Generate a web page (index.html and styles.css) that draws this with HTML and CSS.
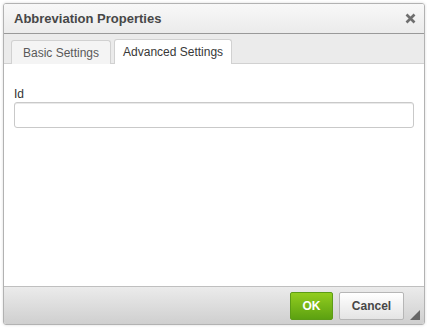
FILE: index.html
```html
<!DOCTYPE html>
<html>
<head>
    <meta charset="utf-8">
    <link rel="stylesheet" href="styles.css">
</head>
<body>
<div class="dialog">
    <div class="title">
        <span class="title-text">Abbreviation Properties</span>
        <svg class="close" width="11" height="11" viewBox="0 0 11 11"><path d="M1.5 1.5 L9.5 9.5 M9.5 1.5 L1.5 9.5" stroke="#6f6f6f" stroke-width="2.6"/></svg>
    </div>
    <div class="tabs">
        <div class="tab">Basic Settings</div>
        <div class="tab selected">Advanced Settings</div>
    </div>
    <div class="contents">
        <label for="id" class="field-label">Id</label>
        <input id="id" type="text" class="field-input" />
    </div>
    <div class="footer">
        <button class="btn ok">OK</button>
        <button class="btn cancel">Cancel</button>
        <span class="resize"></span>
    </div>
</div>
</body>
</html>
```

FILE: styles.css
```css
body {margin:0; background:#fff; font-family:"Liberation Sans", Arial, sans-serif; font-size:12px; color:#333;}
.dialog {margin:3px; width:422px; height:322px; border:1px solid #b2b2b2; border-radius:3px; display:flex; flex-direction:column; box-sizing:border-box; overflow:hidden; box-shadow:0 0 3px rgba(0,0,0,0.15);}
.title {height:30px; display:flex; align-items:center; justify-content:space-between; padding:0 8px 0 10px; background:linear-gradient(#f8f8f8, #ebebeb); border-bottom:1px solid #999; box-sizing:border-box;}
.title-text {font-weight:bold; font-size:13px; color:#474747;}
.close {display:block;}
.tabs {height:30px; background:#ebebeb; display:flex; align-items:flex-end; padding-left:7px; gap:3px; border-bottom:1px solid #d1d1d1; box-sizing:border-box;}
.tab {height:24px; padding:0 11px; display:flex; align-items:center; border:1px solid #d1d1d1; border-bottom:none; border-radius:3px 3px 0 0; background:#f4f4f4; color:#595959; margin-bottom:-1px; box-sizing:border-box;}
.tab.selected {background:#fff; height:25px; color:#383838; padding:0 8px;}
.contents {flex:1; background:#fff; padding:23px 10px 0 10px; display:flex; flex-direction:column;}
.field-label {color:#333; margin-bottom:1px; line-height:14px;}
.field-input {height:26px; box-sizing:border-box; border:1px solid #c9c9c9; border-radius:3px; box-shadow:inset 0 1px 0 #e9e9e9; margin:0;}
.footer {height:38px; border-top:1px solid #bfbfbf; background:linear-gradient(#ebebeb, #cfcfcf); display:flex; align-items:center; justify-content:flex-end; padding-right:20px; gap:6px; position:relative; box-sizing:border-box;}
.btn {height:28px; border-radius:2px; font-family:"Liberation Sans", Arial, sans-serif; font-size:12px; font-weight:bold; padding:0;}
.ok {background:linear-gradient(#92cd1f, #5ca111); border:1px solid #5c9c16; color:#fff; width:43px;}
.cancel {background:linear-gradient(#fff, #e4e4e4); border:1px solid #b6b6b6; color:#474747; width:65px;}
.resize {position:absolute; right:4px; bottom:4px; width:0; height:0; border-left:10px solid transparent; border-bottom:10px solid #666;}
```
